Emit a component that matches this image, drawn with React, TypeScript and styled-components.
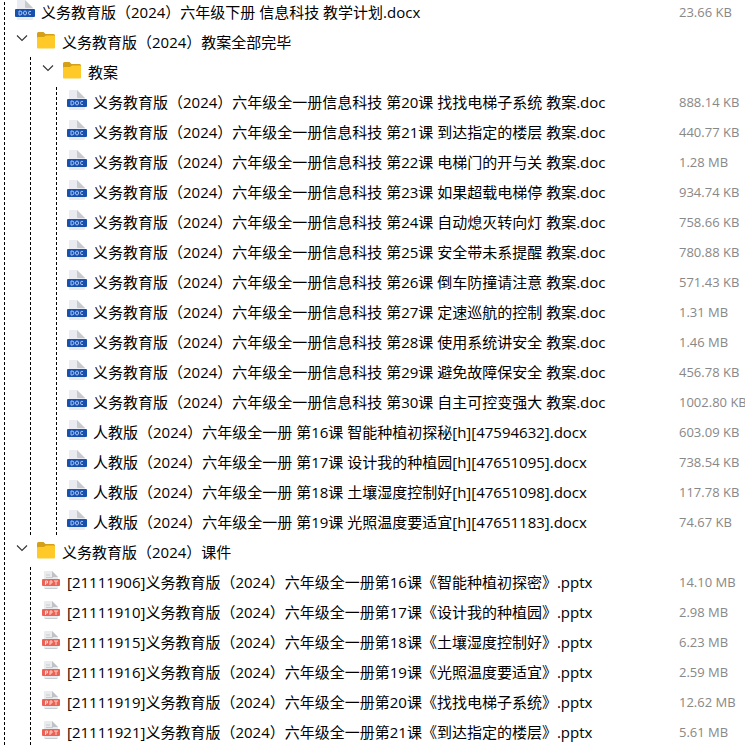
import React from "react";
import styled, { createGlobalStyle } from "styled-components";

const GlobalStyle = createGlobalStyle`
  * { box-sizing: border-box; }
  html, body { margin: 0; background: #fff; }
  html, body, #root { height: 100%; }
  body { overflow: hidden; font-family: "Open Sans", "Noto Sans CJK SC", sans-serif; }
`;

const Page = styled.main`
  height: 100%;
  overflow: hidden;
  padding-left: 4px;
`;

const Branch = styled.ul<{ $root?: boolean }>`
  list-style: none;
  margin: 0 0 0 ${(p) => (p.$root ? 0 : 26)}px;
  margin-top: ${(p) => (p.$root ? -3 : 0)}px;
  padding: 0;
  background: repeating-linear-gradient(#000 0 3px, transparent 3px 5px) 0 0 / 1px 100% no-repeat;
`;

const Row = styled.div`
  display: flex;
  align-items: center;
  height: 30px;
  padding-left: 11px;
`;

const Toggle = styled.button`
  display: flex;
  align-items: center;
  width: 21px;
  height: 22px;
  margin: 0 0 8px;
  padding: 0 0 0 1px;
  border: 0;
  background: none;
  flex: none;
`;

const Icon = styled.svg`
  flex: none;
  width: 20px;
  height: 20px;
  margin: 0 6px 4px 0;
`;

const Name = styled.span`
  flex: 1;
  min-width: 0;
  font-size: 15px;
  line-height: 30px;
  color: #000;
  white-space: nowrap;
`;

const Size = styled.span`
  flex: none;
  width: 66px;
  font-size: 13px;
  line-height: 30px;
  color: #888;
  white-space: nowrap;
`;

type Kind = "doc" | "ppt";
type FileNode = { name: string; size: string; kind: Kind };
type FolderNode = { name: string; children: TreeNode[] };
type TreeNode = FileNode | FolderNode;

const lesson = (n: number, title: string, size: string): FileNode => ({
  name: `义务教育版（2024）六年级全一册信息科技 第${n}课 ${title} 教案.doc`, size, kind: "doc",
});
const plan = (n: number, title: string, id: string, size: string): FileNode => ({
  name: `人教版（2024）六年级全一册 第${n}课 ${title}[h][${id}].docx`, size, kind: "doc",
});
const slides = (id: string, n: number, title: string, size: string): FileNode => ({
  name: `[${id}]义务教育版（2024）六年级全一册第${n}课《${title}》.pptx`, size, kind: "ppt",
});

const tree: TreeNode[] = [
  { name: "义务教育版（2024）六年级下册 信息科技 教学计划.docx", size: "23.66 KB", kind: "doc" },
  {
    name: "义务教育版（2024）教案全部完毕",
    children: [
      {
        name: "教案",
        children: [
          lesson(20, "找找电梯子系统", "888.14 KB"),
          lesson(21, "到达指定的楼层", "440.77 KB"),
          lesson(22, "电梯门的开与关", "1.28 MB"),
          lesson(23, "如果超载电梯停", "934.74 KB"),
          lesson(24, "自动熄灭转向灯", "758.66 KB"),
          lesson(25, "安全带未系提醒", "780.88 KB"),
          lesson(26, "倒车防撞请注意", "571.43 KB"),
          lesson(27, "定速巡航的控制", "1.31 MB"),
          lesson(28, "使用系统讲安全", "1.46 MB"),
          lesson(29, "避免故障保安全", "456.78 KB"),
          lesson(30, "自主可控变强大", "1002.80 KB"),
          plan(16, "智能种植初探秘", "47594632", "603.09 KB"),
          plan(17, "设计我的种植园", "47651095", "738.54 KB"),
          plan(18, "土壤湿度控制好", "47651098", "117.78 KB"),
          plan(19, "光照温度要适宜", "47651183", "74.67 KB"),
        ],
      },
    ],
  },
  {
    name: "义务教育版（2024）课件",
    children: [
      slides("21111906", 16, "智能种植初探密", "14.10 MB"),
      slides("21111910", 17, "设计我的种植园", "2.98 MB"),
      slides("21111915", 18, "土壤湿度控制好", "6.23 MB"),
      slides("21111916", 19, "光照温度要适宜", "2.59 MB"),
      slides("21111919", 20, "找找电梯子系统", "12.62 MB"),
      slides("21111921", 21, "到达指定的楼层", "5.61 MB"),
    ],
  },
];

const Chevron = () => (
  <svg width="12" height="8" viewBox="0 0 12 8" fill="none" stroke="#333" strokeWidth="1.1" aria-hidden>
    <path d="M1 1.5 6 6.5 11 1.5" />
  </svg>
);

const FolderIcon = () => (
  <Icon viewBox="0 0 20 20" aria-hidden>
    <path d="M1 3.500q0-1.500 1.500-1.500h5l2 2h8q1.500 0 1.500 1.500v4H1z" fill="#d4a017" />
    <path d="M1 8q0-1 1-1h6l2-1.500h8q1 0 1 1V17.500q0 1-1 1H2q-1 0-1-1z" fill="#ffca28" />
  </Icon>
);

const DocIcon = () => (
  <Icon viewBox="0 0 20 20" aria-hidden>
    <path d="M2 1q0-1 1-1h7l8 8v11q0 1-1 1H3q-1 0-1-1z" fill="#e9ebf1" />
    <path d="M10 0l8 8h-7q-1 0-1-1z" fill="#c8c9cd" />
    <rect x="0" y="9" width="20" height="8" rx="1" fill="#1750ad" />
    <path d="M4 11v4h1q2 0 2-2t-2-2zM10 11q-1.500 0-1.500 2t1.500 2 1.500-2-1.500-2M16 11.500q-2.500-1-2.500 1.500t2.500 1.500" fill="none" stroke="#a9c4f5" />
  </Icon>
);

const PptIcon = () => (
  <Icon viewBox="0 0 20 20" aria-hidden>
    <path d="M3 2q0-1 1-1h7l6 6v12H3z" fill="#e9ebed" />
    <path d="M11 1l6 6h-6z" fill="#bfc3c7" />
    <path d="M5 5h4M5 7.500h7M4 18.500h12" stroke="#c9cdd1" />
    <rect x="1" y="9" width="18" height="7" rx="1" fill="#ec6255" />
    <path d="M4.500 15v-4h2v2h-2M9 15v-4h2v2H9M13 11h4M15 11v4" fill="none" stroke="#ffd2cc" />
  </Icon>
);

const Item = ({ node }: { node: TreeNode }) => {
  const [open, setOpen] = React.useState(true);
  if ("children" in node) {
    return (
      <li>
        <Row>
          <Toggle type="button" aria-label={node.name} aria-expanded={open} onClick={() => setOpen(!open)}>
            <Chevron />
          </Toggle>
          <FolderIcon />
          <Name>{node.name}</Name>
        </Row>
        {open && (
          <Branch>
            {node.children.map((child) => <Item key={child.name} node={child} />)}
          </Branch>
        )}
      </li>
    );
  }
  return (
    <li>
      <Row>
        {node.kind === "doc" ? <DocIcon /> : <PptIcon />}
        <Name>{node.name}</Name>
        <Size>{node.size}</Size>
      </Row>
    </li>
  );
};

export default function App() {
  return (
    <Page>
      <GlobalStyle />
      <Branch $root>
        {tree.map((node) => <Item key={node.name} node={node} />)}
      </Branch>
    </Page>
  );
}
